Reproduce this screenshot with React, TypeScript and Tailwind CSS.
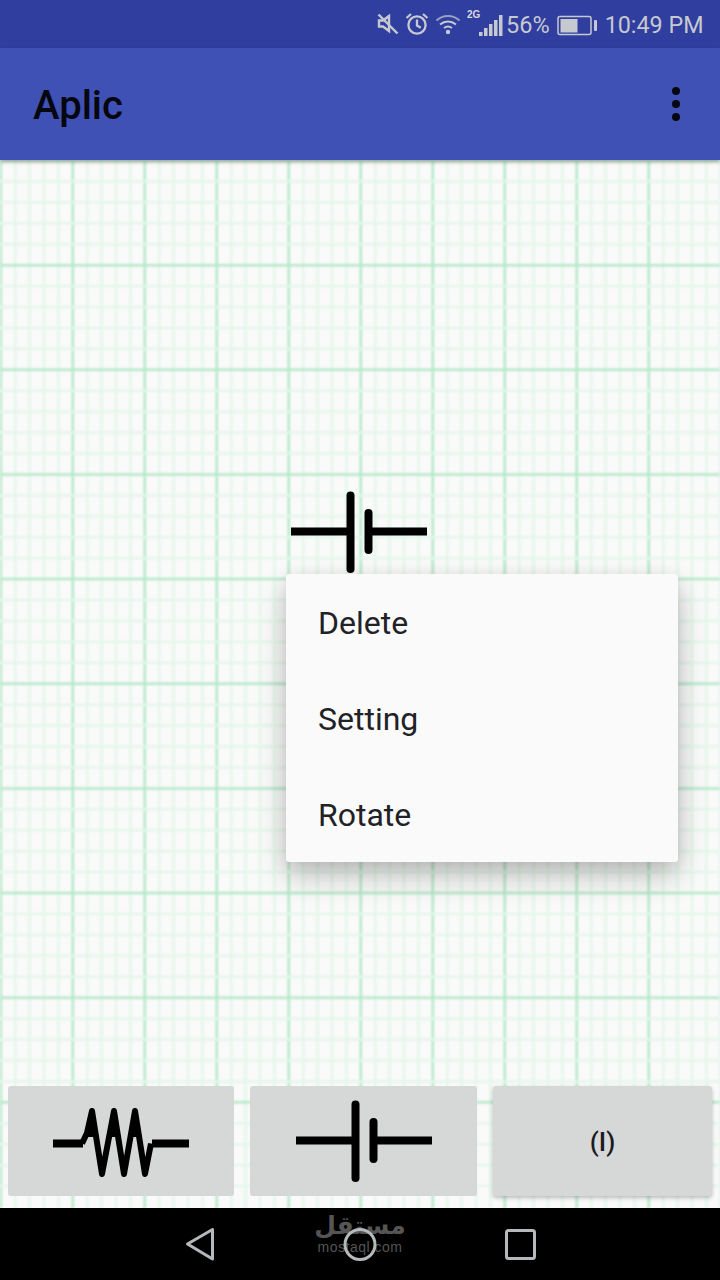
import React from "react";

function BatterySymbol() {
  return (
    <svg width="136" height="88" viewBox="0 0 136 88" className="block blur-[0.4px]">
      <path d="M0 43.500h58M78 43.500h58" stroke="#000" strokeWidth="8" fill="none" />
      <path d="M59.500 7.500V81" stroke="#000" strokeWidth="8" strokeLinecap="round" fill="none" />
      <path d="M77.500 25V62" stroke="#000" strokeWidth="8" strokeLinecap="round" fill="none" />
    </svg>
  );
}

function ResistorSymbol() {
  return (
    <svg width="136" height="76" viewBox="0 0 136 76" className="block blur-[0.4px]">
      <path d="M0 40.500H30M99 40.500H136" stroke="#000" strokeWidth="8" fill="none" />
      <path
        d="M29 40.500L34 30L39 8L49 71L61 8L71 71L82 8L92 71L98 40.500"
        stroke="#000"
        strokeWidth="6"
        strokeLinejoin="round"
        fill="none"
      />
      <path d="M33 34L39 5L45 34zM55 34L61 5L67 34zM76 34L82 5L88 34z" fill="#000" />
    </svg>
  );
}

function StatusIcons() {
  return (
    <div className="flex items-center h-full text-[#c6c9cf]">
      <svg width="22" height="22" viewBox="0 0 22 22" className="ml-[377px]" fill="none" stroke="currentColor" strokeWidth="2.400">
        <path d="M2 7.500h4l6-4.500v15l-6-4.500H2z" />
        <path d="M1.500 1.500l19 19" />
      </svg>
      <svg width="24" height="24" viewBox="0 0 24 24" className="ml-[6px]" fill="none" stroke="currentColor" strokeWidth="2.300">
        <circle cx="12" cy="13" r="8.600" />
        <path d="M12 7.500V13.500l3.800 2.200" />
        <path d="M1.500 6l4.500-4M22.500 6L18 2" />
      </svg>
      <svg width="26" height="22" viewBox="0 0 26 22" className="ml-[6px]" fill="none" stroke="currentColor" strokeWidth="2">
        <path d="M1.500 7.500C8 1.500 18 1.500 24.500 7.500" strokeOpacity="0.7" />
        <path d="M5 11.500c4.800-4 11.200-4 16 0" />
        <path d="M9 15c2.500-1.800 5.500-1.800 8 0" />
        <circle cx="13" cy="19" r="2.200" fill="currentColor" stroke="none" />
      </svg>
      <div className="relative ml-[5px] w-[38px] h-[28px]">
        <span className="absolute left-[1px] top-[-1px] text-[10px] leading-[12px] font-bold text-[#d8dade] font-['Liberation_Sans',sans-serif]">
          2G
        </span>
        <svg width="24" height="22" viewBox="0 0 24 22" className="absolute left-[13px] top-[5px]" fill="currentColor">
          <rect x="0" y="17" width="3.500" height="4" />
          <rect x="5" y="13" width="3.500" height="8" />
          <rect x="10" y="9" width="3.500" height="12" />
          <rect x="15" y="5" width="3.500" height="16" />
          <rect x="20" y="0" width="3.500" height="21" />
        </svg>
      </div>
      <span className="ml-[2px] mt-[3px] text-[23.5px] leading-none">56%</span>
      <svg width="41" height="22" viewBox="0 0 41 22" className="ml-[7px] mt-[3px]">
        <rect x="1" y="1.500" width="33" height="18" rx="2" fill="none" stroke="currentColor" strokeWidth="1.500" />
        <rect x="3.500" y="4" width="17" height="13.500" fill="currentColor" />
        <rect x="37" y="5" width="3" height="11" rx="1" fill="currentColor" />
      </svg>
      <span className="ml-[7px] mt-[3px] text-[23.3px] leading-none whitespace-nowrap">10:49 PM</span>
    </div>
  );
}

export default function App() {
  const minorX = Array.from({ length: 51 }, (_, i) => i * 14.4 + 0.8);
  const minorY = Array.from({ length: 50 }, (_, i) => i * 20.93 + 0.5);
  return (
    <div className="w-[720px] h-[1280px] flex flex-col overflow-hidden bg-[#fafafa] font-['Roboto',sans-serif]">
      <div className="h-[48px] shrink-0 bg-[#303e9f]">
        <StatusIcons />
      </div>
      <div className="relative z-10 h-[112px] shrink-0 bg-[#3f51b5] shadow-[0_2px_4px_rgba(0,0,0,0.3)] flex items-center justify-between pl-[33px] pr-[40px]">
        <span className="text-[40px] mt-[4px] font-medium text-[#05060e] leading-none">Aplic</span>
        <div className="flex flex-col gap-[5px]">
          <span className="w-[8px] h-[8px] rounded-full bg-[#05060e]" />
          <span className="w-[8px] h-[8px] rounded-full bg-[#05060e]" />
          <span className="w-[8px] h-[8px] rounded-full bg-[#05060e]" />
        </div>
      </div>
      <div className="relative flex-1 flex flex-col justify-end">
        <svg className="absolute inset-0 blur-[0.8px]" width="720" height="1048" viewBox="0 0 720 1048">
          {minorX.map((x, i) => (
            <line key={`v${i}`} x1={x} x2={x} y1="0" y2="1048" stroke={i % 5 === 0 ? "#b4e8c8" : "#e4f6ea"} strokeWidth="2.500" />
          ))}
          {minorY.map((y, i) => (
            <line key={`h${i}`} x1="0" x2="720" y1={y} y2={y} stroke={i % 5 === 0 ? "#b4e8c8" : "#e4f6ea"} strokeWidth="2.500" />
          ))}
        </svg>

        <div className="absolute left-[291px] top-[328px]">
          <BatterySymbol />
        </div>

        <div className="absolute left-[286px] top-[414px] w-[392px] h-[288px] rounded-[3px] bg-[#fafafa] shadow-[0_16px_32px_rgba(0,0,0,0.2),0_4px_18px_rgba(0,0,0,0.12)] flex flex-col text-[#212226] text-[32px]">
          <div className="h-[96px] pt-[2px] flex items-center pl-[32px]">Delete</div>
          <div className="h-[96px] pt-[2px] flex items-center pl-[32px]">Setting</div>
          <div className="h-[96px] pt-[2px] flex items-center pl-[32px]">Rotate</div>
        </div>

        <div className="relative flex gap-[16px] px-[8px] pb-[12px]">
          <div className="w-[226px] h-[110px] rounded-[3px] bg-[#d6d7d7] flex items-center justify-center">
            <ResistorSymbol />
          </div>
          <div className="w-[227px] h-[110px] rounded-[3px] bg-[#d6d7d7] flex items-center justify-center">
            <BatterySymbol />
          </div>
          <div className="flex-1 h-[110px] pt-[3px] rounded-[3px] bg-[#d6d7d7] shadow-[0_2px_4px_rgba(0,0,0,0.25)] flex items-center justify-center text-[26px] font-medium text-[#1a1b1e]">
            (I)
          </div>
        </div>
      </div>
      <div className="relative h-[72px] shrink-0 bg-black flex items-center justify-center">
        <div className="absolute left-[316px] top-[4px] w-[88px] flex flex-col items-center text-[#555555]">
          <span className="text-[25px] leading-[28px] font-bold font-['DejaVu_Sans',sans-serif]">مستقل</span>
          <span className="text-[14px] leading-[14px] tracking-[0.5px] font-['Liberation_Sans',sans-serif]">mostaql.com</span>
        </div>
        <svg width="400" height="72" viewBox="0 0 400 72" className="relative" fill="none" stroke="#b4b9bb" strokeWidth="3" strokeLinejoin="round">
          <path d="M52.500 21.500v29.500L27.500 36z" />
          <circle cx="200" cy="36.500" r="15" />
          <rect x="346.500" y="22.500" width="28" height="28" rx="2" />
        </svg>
      </div>
    </div>
  );
}
